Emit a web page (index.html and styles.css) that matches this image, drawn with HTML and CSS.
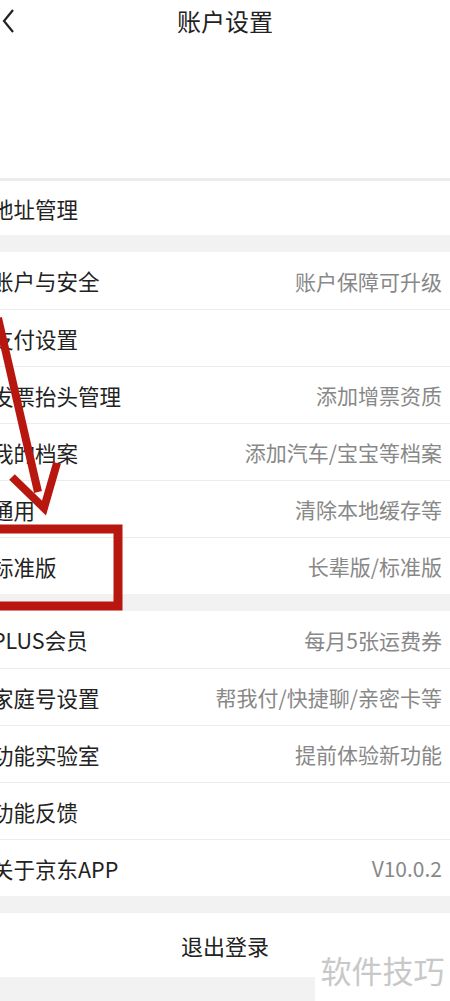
FILE: index.html
```html
<!DOCTYPE html>
<html>
<head>
    <title>账户设置</title>
    <meta charset="UTF-8">
    <meta name="viewport" content="width=device-width, initial-scale=1.0">
    <link rel="stylesheet" href="styles.css">
</head>
<body>
    <div class="page">
        <div class="header">
            <div class="topbar">
                <svg class="back" width="14" height="26" viewBox="0 0 14 26">
                    <polyline points="12,2 3,13 12,24" fill="none" stroke="#222" stroke-width="2.2"/>
                </svg>
                <h1>账户设置</h1>
            </div>
        </div>

        <div class="group">
            <div class="row short"><span class="label">地址管理</span></div>
        </div>

        <div class="group">
            <div class="row first"><span class="label">账户与安全</span><span class="hint">账户保障可升级</span></div>
            <div class="row"><span class="label">支付设置</span></div>
            <div class="row"><span class="label">发票抬头管理</span><span class="hint">添加增票资质</span></div>
            <div class="row"><span class="label">我的档案</span><span class="hint">添加汽车/宝宝等档案</span></div>
            <div class="row"><span class="label">通用</span><span class="hint">清除本地缓存等</span></div>
            <div class="row"><span class="label">标准版</span><span class="hint">长辈版/标准版</span></div>
        </div>

        <div class="group">
            <div class="row first"><span class="label">PLUS会员</span><span class="hint">每月5张运费券</span></div>
            <div class="row"><span class="label">家庭号设置</span><span class="hint">帮我付/快捷聊/亲密卡等</span></div>
            <div class="row"><span class="label">功能实验室</span><span class="hint">提前体验新功能</span></div>
            <div class="row"><span class="label">功能反馈</span></div>
            <div class="row"><span class="label">关于京东APP</span><span class="hint">V10.0.2</span></div>
        </div>

        <div class="logout">退出登录</div>

        <!-- annotation drawn over the screenshot -->
        <svg class="marks" width="450" height="1001" viewBox="0 0 450 1001">
            <line x1="-2" y1="318" x2="38" y2="492" stroke="#b8170f" stroke-width="8"/>
            <polyline points="12,477 44,508 57,463" fill="none" stroke="#b8170f" stroke-width="8" stroke-linejoin="miter"/>
            <rect x="-20" y="529" width="138" height="77" fill="none" stroke="#b8170f" stroke-width="9"/>
        </svg>

        <div class="watermark">软件技巧</div>
    </div>
</body>
</html>
```

FILE: styles.css
```css
body {
    margin: 0;
    background: #f2f2f2;
    font-family: "Noto Sans CJK SC", "Noto Sans", sans-serif;
    color: #222;
}
.page {
    position: relative;
    width: 450px;
    height: 1001px;
    overflow: hidden;
    background: #f2f2f2;
}
.header {
    height: 178px;
    background: white;
    border-bottom: 3px solid #ececec;
}
.topbar {
    height: 42px;
    display: flex;
    align-items: center;
    justify-content: center;
    position: relative;
}
.back {
    position: absolute;
    left: 1px;
    top: 8px;
}
h1 {
    margin: 0;
    font-size: 24px;
    font-weight: normal;
    line-height: 42px;
    color: #222;
}
.group {
    background: white;
    margin-bottom: 17px;
}
.row {
    height: 57px;
    box-sizing: border-box;
    border-top: 1px solid #ececec;
    display: flex;
    align-items: center;
    justify-content: space-between;
    padding-right: 8px;
    font-size: 21px;
}
.row.first {
    border-top: none;
}
.row.short {
    border-top: none;
    height: 54px;
}
.label {
    margin-left: -8px;
    font-size: 21.5px;
    color: #222;
}
.hint {
    color: #888;
}
.logout {
    height: 64px;
    background: white;
    display: flex;
    align-items: center;
    justify-content: center;
    font-size: 22px;
    color: #222;
}
.marks {
    position: absolute;
    left: 0;
    top: 0;
}
.watermark {
    position: absolute;
    right: 0;
    bottom: 0;
    width: 135px;
    height: 56px;
    background: white;
    color: #c8c8c8;
    font-size: 31px;
    line-height: 50px;
    text-align: center;
}
```
